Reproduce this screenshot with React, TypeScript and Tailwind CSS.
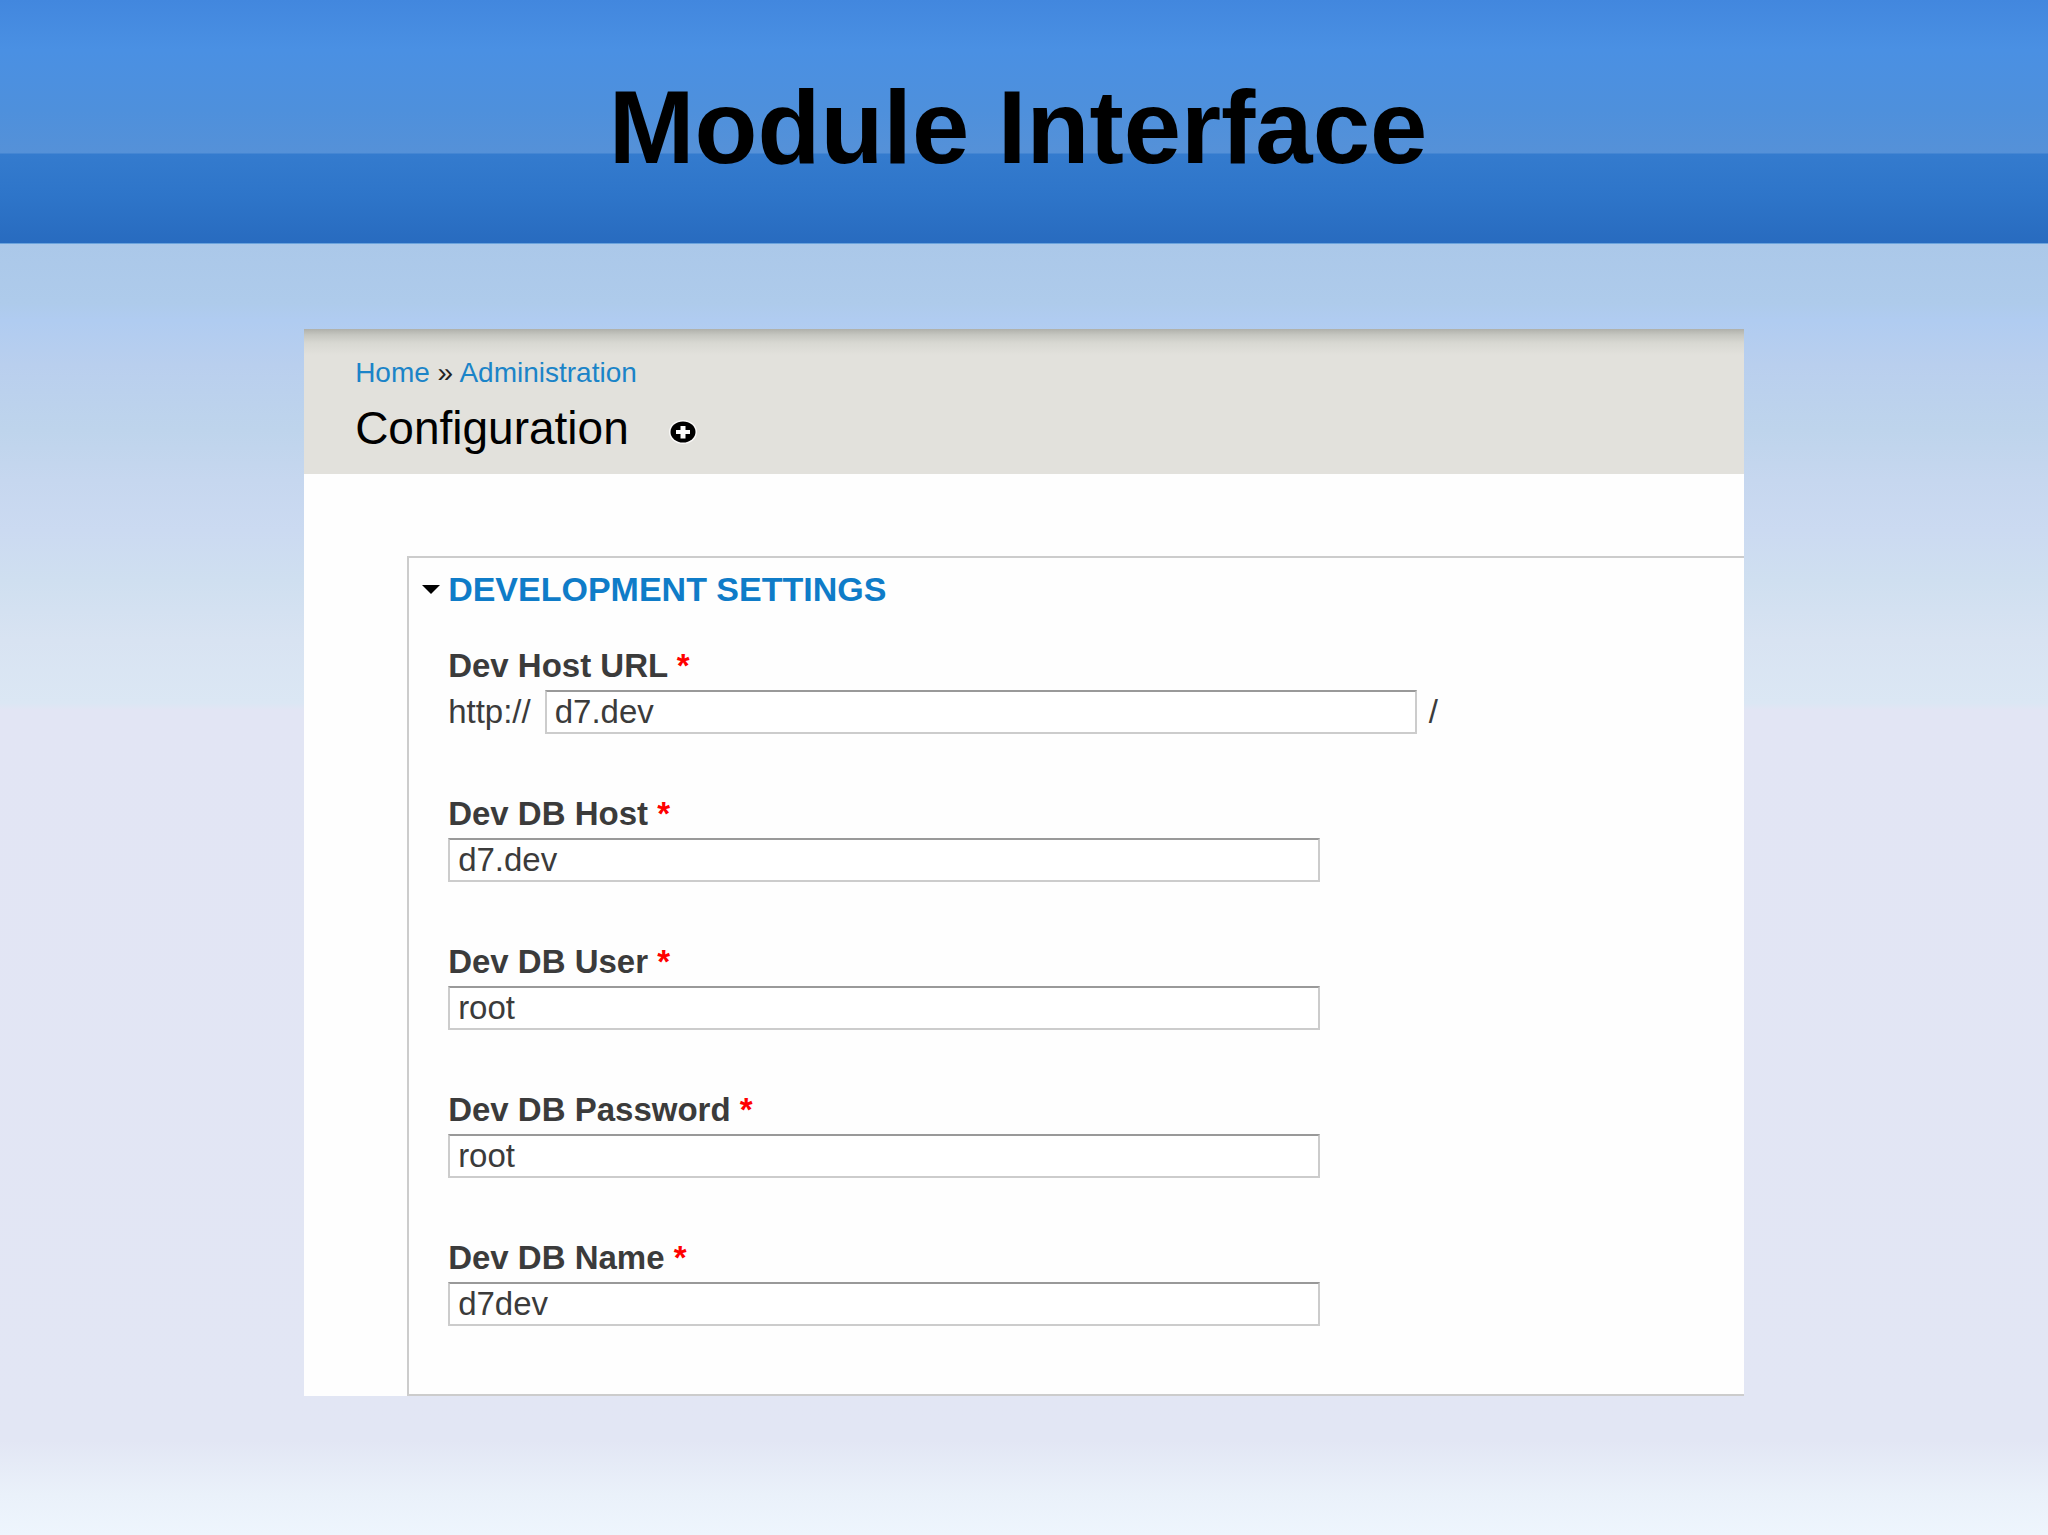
import React, { useState } from 'react';

interface Field {
  id: string;
  label: string;
  value: string;
  prefix?: string;
  suffix?: string;
}

const fields: Field[] = [
  { id: 'dev-host-url', label: 'Dev Host URL', value: 'd7.dev', prefix: 'http://', suffix: '/' },
  { id: 'dev-db-host', label: 'Dev DB Host', value: 'd7.dev' },
  { id: 'dev-db-user', label: 'Dev DB User', value: 'root' },
  { id: 'dev-db-password', label: 'Dev DB Password', value: 'root' },
  { id: 'dev-db-name', label: 'Dev DB Name', value: 'd7dev' },
];

// ─── Text field with optional prefix / suffix ───────────────────────────
const TextField: React.FC<{ field: Field }> = ({ field }) => {
  const [value, setValue] = useState(field.value);
  return (
    <div className="flex flex-col gap-1">
      <label htmlFor={field.id} className="font-bold leading-10">
        {field.label} <span className="text-[#ff0000]">*</span>
      </label>
      <div className="flex items-center gap-3 leading-10">
        {field.prefix && <span className="pr-0.5">{field.prefix}</span>}
        <input
          id={field.id}
          type="text"
          required
          value={value}
          onChange={e => setValue(e.target.value)}
          className="h-11 w-[872px] min-w-0 border-2 border-[#cccccc] border-t-[#999999] bg-white px-2 leading-10 outline-none"
        />
        {field.suffix && <span>{field.suffix}</span>}
      </div>
    </div>
  );
};

// ─── Page header: breadcrumb + title ────────────────────────────────────
const PageHeader: React.FC = () => (
  <header className="bg-[#e2e1dc] bg-[linear-gradient(to_bottom,#afb0aa_0px,#c6c7c1_6px,#d8d8d2_14px,#e2e1dc_26px)] px-[51px] pt-6 pb-4">
    <nav aria-label="Breadcrumb" className="text-[28px] leading-10 text-[#222222]">
      <a href="#home" className="text-[#1b84c8]">Home</a> » <a href="#administration" className="text-[#1b84c8]">Administration</a>
    </nav>
    <div className="flex items-center gap-10 pt-[5px]">
      <h2 className="text-[46px] leading-[60px] text-black">Configuration</h2>
      <button type="button" aria-label="Add to shortcuts" className="pt-2">
        <svg width="28" height="24" viewBox="0 0 28 24">
          <ellipse cx="14" cy="12" rx="14" ry="12" fill="#faf9f8" />
          <ellipse cx="14" cy="12" rx="12.5" ry="10.5" fill="#000" />
          <path d="M11.5 6h5v4H21v4h-4.500v4.500h-5V14H7v-4h4.500z" fill="#fff" />
        </svg>
      </button>
    </div>
  </header>
);

const App: React.FC = () => {
  const [open, setOpen] = useState(true);

  return (
    <div className="flex min-h-screen flex-col bg-[linear-gradient(to_bottom,#abc8e9_243px,#aecbeb_303px,#b0ccf1_320px,#b9cfee_365px,#bed4ec_430px,#c6d7ef_480px,#cbdaf1_530px,#cfdff0_580px,#d8e3f2_640px,#dbe7f4_703px,#e2e5f4_710px,#e2e6f4_1440px,#eaf1fa_1495px,#eef5fd_1535px)] font-['Liberation_Sans',Arial,sans-serif]">
      <div className="flex flex-col items-center border-b border-[#6ba3dc] bg-[linear-gradient(to_bottom,#4287de_0px,#4a90e3_50px,#4e90dc_110px,#5591d8_153px,#347bce_154px,#2e75c9_195px,#286bbf_243px)] pt-[68px] pb-[55px]">
        <h1 className="pr-3 text-[103px] leading-[120px] font-bold text-black">Module Interface</h1>
      </div>

      <main className="mx-auto mt-[85px] mb-[138px] w-[70.3%] bg-[#fefefe] text-[33px] text-[#3b3b3b]">
        <PageHeader />
        <form className="pt-[82px] pl-[103px]">
          <fieldset className="flex flex-col border-2 border-r-0 border-[#cccccc] pt-[11px] pb-[68px]">
            <legend className="float-left w-full pl-[13px]">
              <button
                type="button"
                aria-expanded={open}
                onClick={() => setOpen(!open)}
                className="flex items-center gap-2 text-[34px] leading-10 font-bold text-[#0f7cc8] uppercase"
              >
                <svg width="18" height="10" viewBox="0 0 18 10" className={open ? '' : '-rotate-90'}>
                  <path d="M0 1h18L9 10z" fill="#000" />
                </svg>
                Development settings
              </button>
            </legend>
            {open && (
              <div className="flex flex-col gap-[60px] pt-[37px] pl-[39px]">
                {fields.map(field => (
                  <TextField key={field.id} field={field} />
                ))}
              </div>
            )}
          </fieldset>
        </form>
      </main>
    </div>
  );
};

export default App;
